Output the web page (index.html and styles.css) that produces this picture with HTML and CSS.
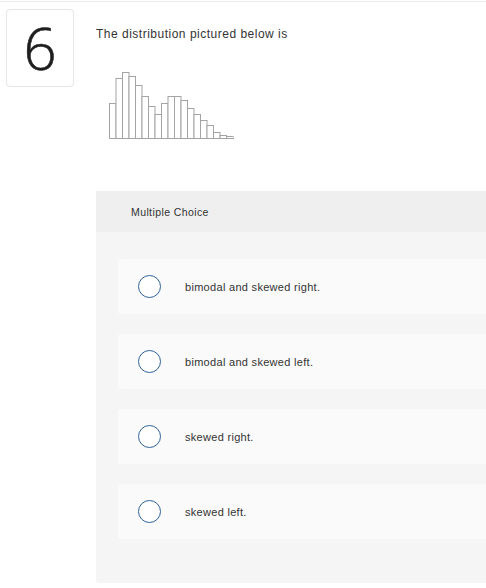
FILE: index.html
```html
<!DOCTYPE html>
<html>
<head>
<meta charset="utf-8">
<link rel="stylesheet" href="styles.css">
</head>
<body>
<div class="page">
  <div class="qnum">6</div>
  <div class="content">
    <p class="prompt">The distribution pictured below is</p>
    <svg class="hist" width="126" height="68" viewBox="0 0 126 68">
      <g fill="#fff" stroke="#a4a4a4" stroke-width="1">
        <rect x="0.5" y="31.5" width="6.5" height="35"/>
        <rect x="7" y="6.5" width="6.5" height="60"/>
        <rect x="13.5" y="0.5" width="6.5" height="66"/>
        <rect x="20" y="4.5" width="6.5" height="62"/>
        <rect x="26.5" y="13.5" width="6.5" height="53"/>
        <rect x="33" y="24.5" width="6.5" height="42"/>
        <rect x="39.5" y="34.5" width="6.5" height="32"/>
        <rect x="46" y="42.5" width="6.5" height="24"/>
        <rect x="52.5" y="31.5" width="6.5" height="35"/>
        <rect x="59" y="24.5" width="6.5" height="42"/>
        <rect x="65.5" y="24.5" width="6.5" height="42"/>
        <rect x="72" y="28.5" width="6.5" height="38"/>
        <rect x="78.5" y="36.5" width="6.5" height="30"/>
        <rect x="85" y="42.5" width="6.5" height="24"/>
        <rect x="91.5" y="48.5" width="6.5" height="18"/>
        <rect x="98" y="53.5" width="6.5" height="13"/>
        <rect x="104.5" y="60.5" width="6.5" height="6"/>
        <rect x="111" y="63.5" width="6.5" height="3"/>
        <rect x="117.5" y="64.5" width="6.5" height="2"/>
        <line x1="0" y1="66.5" x2="125" y2="66.5"/>
      </g>
    </svg>
    <div class="panel">
      <div class="panel-head">Multiple Choice</div>
      <div class="options">
        <div class="option"><span class="radio"></span><span class="label">bimodal and skewed right.</span></div>
        <div class="option"><span class="radio"></span><span class="label">bimodal and skewed left.</span></div>
        <div class="option"><span class="radio"></span><span class="label">skewed right.</span></div>
        <div class="option"><span class="radio"></span><span class="label">skewed left.</span></div>
      </div>
    </div>
  </div>
</div>
</body>
</html>
```
FILE: styles.css
```css
html, body {
  margin: 0;
  padding: 0;
  background: #fff;
}
body {
  font-family: "Liberation Sans", Arial, sans-serif;
  color: #333;
  overflow: hidden;
}
.page {
  border-top: 1px solid #ececec;
  margin-top: 1px;
  display: flex;
  align-items: flex-start;
  padding-left: 6px;
}
.qnum {
  flex: none;
  width: 66px;
  height: 76px;
  margin-top: 7px;
  border: 1px solid #e6e6e6;
  border-radius: 4px;
  display: flex;
  align-items: center;
  justify-content: center;
  font-family: "Open Sans", "Liberation Sans", sans-serif;
  font-weight: 300;
  font-size: 58px;
  color: #1e1e1e;
  line-height: 1;
  -webkit-text-stroke: 0.6px #1e1e1e;
}
.content {
  flex: 1;
  margin-left: 22px;
  min-width: 0;
}
.prompt {
  margin: 25px 0 0 0;
  font-size: 12px;
  letter-spacing: 0.5px;
  line-height: 14px;
  color: #333;
}
.hist {
  display: block;
  margin: 31px 0 0 13px;
}
.panel {
  margin-top: 51px;
  background: #f5f5f5;
  border-bottom-left-radius: 4px;
  padding-bottom: 44px;
  margin-right: -20px;
}
.panel-head {
  background: #efefef;
  height: 41px;
  display: flex;
  align-items: center;
  padding-left: 35px;
  font-size: 10.5px;
  letter-spacing: 0.4px;
  color: #333;
}
.options {
  padding: 27px 0 0 22px;
  display: flex;
  flex-direction: column;
  gap: 20px;
}
.option {
  height: 55px;
  background: #fafafa;
  border-radius: 3px 0 0 3px;
  display: flex;
  align-items: center;
  padding-left: 20px;
}
.radio {
  flex: none;
  width: 21px;
  height: 21px;
  border: 1.5px solid #2e619b;
  border-radius: 50%;
  background: #fff;
}
.label {
  margin-left: 24px;
  font-size: 11px;
  letter-spacing: 0.3px;
  color: #333;
}
```
